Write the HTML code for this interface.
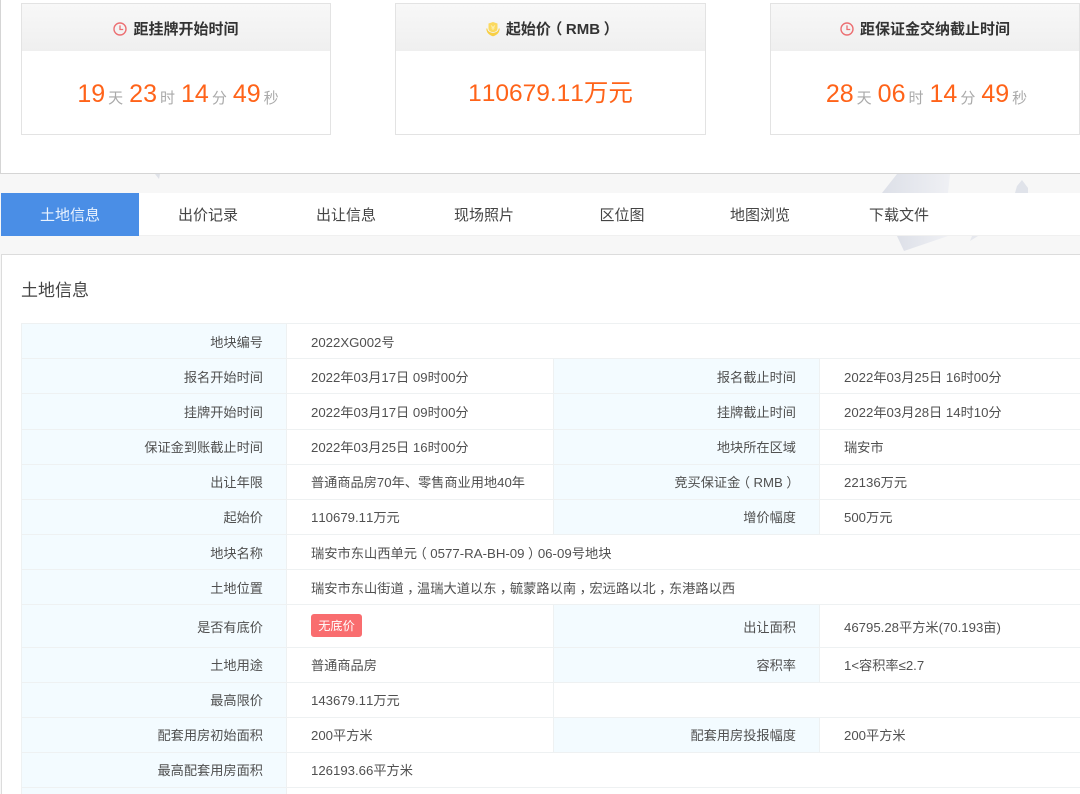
<!DOCTYPE html>
<html lang="zh"><head><meta charset="utf-8"><title>土地信息</title>
<style>
html,body{margin:0;padding:0;width:1080px;height:794px;overflow:hidden;background:#f7f7f7}
body{position:relative;font-family:"Liberation Sans","Noto Sans CJK SC",sans-serif;color:#555;font-size:13.2px;font-kerning:none}
div,svg{position:absolute;box-sizing:border-box}
b{font-weight:inherit;position:relative;left:-3.5px}
u{text-decoration:none;position:relative;left:3.5px}
.card{top:3px;width:310px;height:132px;background:#fff;border:1px solid #e3e3e3}
.hd{left:0;top:0;right:0;height:47px;background:linear-gradient(#f8f8f8,#efefef);text-align:center;line-height:51px;font-size:15px;font-weight:bold;color:#333;white-space:nowrap}
.hd svg{position:static;vertical-align:-2px;margin-right:6px}
.bd{left:0;right:0;top:47px;height:84px;text-align:center;line-height:86px;color:#ff6319;font-size:25px;white-space:nowrap}
.bd.t{padding-left:4px}
.bd i{font-style:normal;font-size:15px;color:#aaa;margin:0 6px 0 3px;position:relative;top:1px}
.tab{top:193px;height:43px;width:138px;line-height:46px;text-align:center;font-size:15px;color:#444}
.l,.v{height:20px;line-height:22px;white-space:nowrap;color:#505050}
.l{text-align:right}
.bg{background:#f3fbff}
.h{height:1px;background:#eef1f2}
.vl{width:1px;background:#eef1f2}
</style></head><body>
<div style="left:0;top:0;width:1080px;height:174px;background:#fff;border-left:1px solid #d5d5d5;border-bottom:1px solid #d5d5d5"></div>

<div class="card" style="left:21px"><div class="hd"><svg width="14" height="14" viewBox="0 0 14 14"><circle cx="7" cy="7" r="6" fill="none" stroke="#ec6f72" stroke-width="1.4"/><path d="M7 3.4V7.5H10.2" fill="none" stroke="#ec6f72" stroke-width="1.3"/></svg>距挂牌开始时间</div>
<div class="bd t">19<i>天</i>23<i>时</i>14<i>分</i>49<i style="margin-right:0">秒</i></div></div>
<div class="card" style="left:395px;width:311px"><div class="hd"><svg width="14" height="16" viewBox="0 0 14 16" style="vertical-align:-3px"><path d="M2.5 2.5L7 1L11.5 2.5V7.5Q11.5 10.5 7 11.2Q2.5 10.5 2.5 7.5Z" fill="#fbd95f"/><path d="M5 4.5L7 6.5L9 4.5M7 6.5V9M5.4 7H8.6" fill="none" stroke="#fdf0b0" stroke-width=".9"/><path d="M.8 7.5Q1 13 7 14.8Q13 13 13.2 7.5Q12.8 10.8 9.5 11.8L7 12.6L4.5 11.8Q1.2 10.8 .8 7.5Z" fill="#f8cf45" stroke="#f8cf45" stroke-width="1"/></svg>起始价<b>（</b>RMB<u>）</u></div>
<div class="bd" style="font-size:24.5px">110679.11万元</div></div>
<div class="card" style="left:770px"><div class="hd"><svg width="14" height="14" viewBox="0 0 14 14"><circle cx="7" cy="7" r="6" fill="none" stroke="#ec6f72" stroke-width="1.4"/><path d="M7 3.4V7.5H10.2" fill="none" stroke="#ec6f72" stroke-width="1.3"/></svg>距保证金交纳截止时间</div>
<div class="bd t" style="padding-left:3px">28<i>天</i>06<i>时</i>14<i>分</i>49<i style="margin-right:0">秒</i></div></div>

<svg style="left:0;top:174px" width="1080" height="80" viewBox="0 0 1080 80"><defs><linearGradient id="g" x1="0" x2="1" y1="0" y2="0"><stop offset="0" stop-color="#dde0e8"/><stop offset="1" stop-color="#eff0f4"/></linearGradient></defs><path d="M155 0H160L159 5Z" fill="#dfe2e8"/><path d="M882 19L897 0H950L948 19Z" fill="url(#g)"/><path d="M897 62L948 62L904 77Z" fill="url(#g)"/><path d="M1015 19L1017 12L1022 6L1028 14V19Z" fill="#e0e3ea"/><path d="M970 67L978 62H972Z" fill="#e6e8ee"/></svg>

<div style="left:1px;top:193px;width:1079px;height:43px;background:#fff;border-bottom:1px solid #f0f0f0"></div>
<div class="tab" style="left:1px;background:#4a8ee6;color:#eaf3ff">土地信息</div>
<div class="tab" style="left:139px">出价记录</div>
<div class="tab" style="left:277px">出让信息</div>
<div class="tab" style="left:415px">现场照片</div>
<div class="tab" style="left:553px">区位图</div>
<div class="tab" style="left:691px">地图浏览</div>
<div class="tab" style="left:830px">下载文件</div>

<div style="left:1px;top:254px;width:1079px;height:540px;background:#fff;border-left:1px solid #dcdcdc;border-top:1px solid #dcdcdc"></div>
<div style="left:21px;top:279px;font-size:17px;line-height:23px;color:#444">土地信息</div>

<div class="bg" style="left:22px;top:324px;width:264px;height:470px"></div>
<div class="bg" style="left:554px;top:359px;width:265px;height:175px"></div>
<div class="bg" style="left:554px;top:605px;width:265px;height:77px"></div>
<div class="bg" style="left:554px;top:718px;width:265px;height:34px"></div>

<div class="h" style="left:21px;right:0;top:323px"></div>
<div class="h" style="left:21px;right:0;top:358px"></div>
<div class="h" style="left:21px;right:0;top:393px"></div>
<div class="h" style="left:21px;right:0;top:429px"></div>
<div class="h" style="left:21px;right:0;top:464px"></div>
<div class="h" style="left:21px;right:0;top:499px"></div>
<div class="h" style="left:21px;right:0;top:534px"></div>
<div class="h" style="left:21px;right:0;top:569px"></div>
<div class="h" style="left:21px;right:0;top:604px"></div>
<div class="h" style="left:21px;right:0;top:647px"></div>
<div class="h" style="left:21px;right:0;top:682px"></div>
<div class="h" style="left:21px;right:0;top:717px"></div>
<div class="h" style="left:21px;right:0;top:752px"></div>
<div class="h" style="left:21px;right:0;top:787px"></div>
<div class="vl" style="left:21px;top:323px;height:471px"></div>
<div class="vl" style="left:286px;top:323px;height:471px"></div>
<div class="vl" style="left:553px;top:358px;height:176px"></div>
<div class="vl" style="left:819px;top:358px;height:176px"></div>
<div class="vl" style="left:553px;top:604px;height:113px"></div>
<div class="vl" style="left:819px;top:604px;height:78px"></div>
<div class="vl" style="left:553px;top:717px;height:35px"></div>
<div class="vl" style="left:819px;top:717px;height:35px"></div>

<div class="l" style="left:22px;width:241px;top:332px">地块编号</div><div class="v" style="left:311px;top:332px">2022XG002号</div>
<div class="l" style="left:22px;width:241px;top:367px">报名开始时间</div><div class="v" style="left:311px;top:367px">2022年03月17日 09时00分</div>
<div class="l" style="left:554px;width:242px;top:367px">报名截止时间</div><div class="v" style="left:844px;top:367px">2022年03月25日 16时00分</div>
<div class="l" style="left:22px;width:241px;top:402px">挂牌开始时间</div><div class="v" style="left:311px;top:402px">2022年03月17日 09时00分</div>
<div class="l" style="left:554px;width:242px;top:402px">挂牌截止时间</div><div class="v" style="left:844px;top:402px">2022年03月28日 14时10分</div>
<div class="l" style="left:22px;width:241px;top:437px">保证金到账截止时间</div><div class="v" style="left:311px;top:437px">2022年03月25日 16时00分</div>
<div class="l" style="left:554px;width:242px;top:437px">地块所在区域</div><div class="v" style="left:844px;top:437px">瑞安市</div>
<div class="l" style="left:22px;width:241px;top:472px">出让年限</div><div class="v" style="left:311px;top:472px">普通商品房70年、零售商业用地40年</div>
<div class="l" style="left:554px;width:242px;top:472px">竞买保证金<b>（</b>RMB<u>）</u></div><div class="v" style="left:844px;top:472px">22136万元</div>
<div class="l" style="left:22px;width:241px;top:507px">起始价</div><div class="v" style="left:311px;top:507px">110679.11万元</div>
<div class="l" style="left:554px;width:242px;top:507px">增价幅度</div><div class="v" style="left:844px;top:507px">500万元</div>
<div class="l" style="left:22px;width:241px;top:543px">地块名称</div><div class="v" style="left:311px;top:543px;font-size:13.25px">瑞安市东山西单元<b>（</b>0577-RA-BH-09<u>）</u>06-09号地块</div>
<div class="l" style="left:22px;width:241px;top:578px">土地位置</div><div class="v" style="left:311px;top:578px;font-size:13.25px">瑞安市东山街道<u>，</u>温瑞大道以东<u>，</u>毓蒙路以南<u>，</u>宏远路以北<u>，</u>东港路以西</div>
<div class="l" style="left:22px;width:241px;top:617px">是否有底价</div>
<div style="left:311px;top:614px;width:51px;height:23px;line-height:24px;text-align:center;background:#f96d6f;color:#fff;border-radius:3px;font-size:12.2px">无底价</div>
<div class="l" style="left:554px;width:242px;top:617px">出让面积</div><div class="v" style="left:844px;top:617px">46795.28平方米(70.193亩)</div>
<div class="l" style="left:22px;width:241px;top:655px">土地用途</div><div class="v" style="left:311px;top:655px">普通商品房</div>
<div class="l" style="left:554px;width:242px;top:655px">容积率</div><div class="v" style="left:844px;top:655px">1&lt;容积率≤2.7</div>
<div class="l" style="left:22px;width:241px;top:690px">最高限价</div><div class="v" style="left:311px;top:690px">143679.11万元</div>
<div class="l" style="left:22px;width:241px;top:725px">配套用房初始面积</div><div class="v" style="left:311px;top:725px">200平方米</div>
<div class="l" style="left:554px;width:242px;top:725px">配套用房投报幅度</div><div class="v" style="left:844px;top:725px">200平方米</div>
<div class="l" style="left:22px;width:241px;top:760px">最高配套用房面积</div><div class="v" style="left:311px;top:760px">126193.66平方米</div>
</body></html>
